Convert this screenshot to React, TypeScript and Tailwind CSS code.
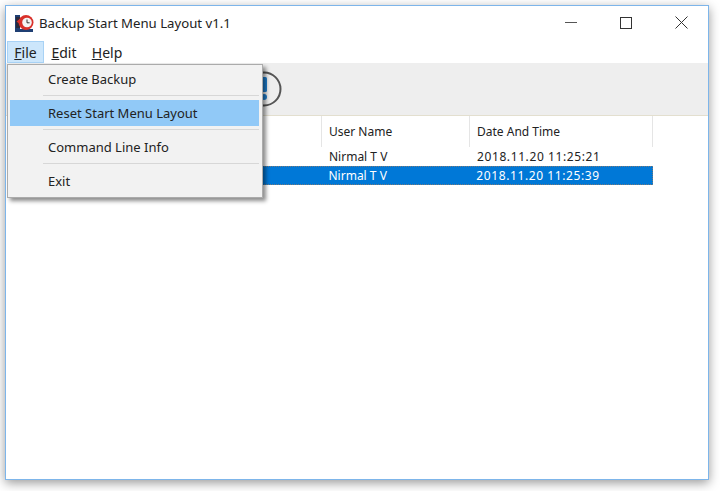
const sans = "font-['Noto_Sans','Open_Sans',sans-serif]";

function AppIcon() {
  return (
    <svg width="19" height="20" viewBox="0 0 19 20" className="shrink-0">
      <path d="M0 1h5v14h13v3H0z" fill="#1f3f73" />
      <rect x="1" y="3" width="4" height="11" fill="#2a2a3a" />
      <circle cx="11" cy="8.5" r="7.5" fill="#d9302a" />
      <circle cx="12" cy="8.5" r="4.8" fill="#f4f4f4" />
      <path d="M12 5.5v3.3h2.6" fill="none" stroke="#333" strokeWidth="1" />
      <path d="M1.5 7.5L6 4v7z" fill="#d9302a" />
    </svg>
  );
}

function WindowButtons() {
  return (
    <div className="mb-[2px] flex items-center">
      <div className="flex h-[33px] w-[55px] items-center justify-center">
        <div className="h-px w-[12px] bg-[#555555]" />
      </div>
      <div className="flex h-[33px] w-[55px] items-center justify-center">
        <div className="h-[12px] w-[12px] border border-[#333333]" />
      </div>
      <div className="flex h-[33px] w-[55px] items-center justify-center pl-[2px]">
        <svg width="13" height="13" viewBox="0 0 13 13">
          <path d="M0.5 0.5l12 12M12.5 0.5l-12 12" stroke="#333333" strokeWidth="1" fill="none" />
        </svg>
      </div>
    </div>
  );
}

function MenuBar() {
  return (
    <div className="flex h-[22px] items-stretch pl-px text-[14px] text-[#222222]">
      <div className="flex w-[37px] items-center justify-center border border-[#a8d2f5] bg-[#cce6fb]">
        <span><u>F</u>ile</span>
      </div>
      <div className="flex w-[40px] items-center justify-center"><span><u>E</u>dit</span></div>
      <div className="flex w-[46px] items-center justify-center"><span><u>H</u>elp</span></div>
    </div>
  );
}

function Toolbar() {
  return (
    <div className="flex h-[53px] items-center border-b border-[#e3dfcf] bg-[#eeeeee] pl-[240px]">
      <svg width="36" height="36" viewBox="0 0 36 36">
        <circle cx="18" cy="18" r="16.5" fill="none" stroke="#555555" strokeWidth="2" />
        <rect x="15.5" y="6" width="5.5" height="15" rx="1.5" fill="#1e7fd0" />
        <circle cx="18" cy="26" r="3" fill="#1e7fd0" />
      </svg>
    </div>
  );
}

function FileMenu() {
  const items = ["Create Backup", "Reset Start Menu Layout", "Command Line Info", "Exit"];
  return (
    <div className="absolute left-[1px] top-[58px] flex h-[134px] w-[256px] flex-col border border-[#ababab] bg-[#f2f2f2] pl-[2px] pr-[3px] pt-[1px] text-[13px] text-[#222222] shadow-[3px_3px_4px_rgba(0,0,0,0.45)]">
      {items.map((label, i) => (
        <div key={label}>
          {i > 0 && <div className="mb-[4px] ml-[33px] mt-[3px] h-px bg-[#d7d7d7]" />}
          <div className={`flex h-[26px] items-center pl-[38px] pt-[2px] ${label === "Reset Start Menu Layout" ? "bg-[#91c9f7]" : ""}`}>
            {label}
          </div>
        </div>
      ))}
    </div>
  );
}

function ListHeader() {
  return (
    <div className="flex h-[31px] text-[12px] text-[#222222]">
      <div className="w-[316px] border-r border-[#e5e5e5]" />
      <div className="flex w-[148px] items-center border-r border-[#e5e5e5] pl-[7px]">User Name</div>
      <div className="flex w-[183px] items-center border-r border-[#e5e5e5] pl-[7px]">Date And Time</div>
    </div>
  );
}

function ListRow({ user, date, selected }: { user: string; date: string; selected?: boolean }) {
  return (
    <div className={`ml-[2px] flex h-[19px] w-[645px] items-center text-[12px] ${selected ? "border border-dotted border-[#7a7a7a] bg-[#0078d7] text-white" : "text-[#222222]"}`}>
      <div className={selected ? "w-[313px]" : "w-[314px]"} />
      <div className="w-[148px] pl-[7px]">{user}</div>
      <div className="w-[183px] pl-[7px] tracking-[0.6px]">{date}</div>
    </div>
  );
}

export default function App() {
  return (
    <div className={`h-[491px] w-[720px] overflow-hidden bg-white pl-[5px] pt-[5px] ${sans}`}>
      <div className="relative flex h-[475px] w-[704px] flex-col border border-[#7db5ea] bg-white shadow-[0_3px_10px_rgba(0,0,0,0.4)]">
        <div className="flex h-[35px] items-center justify-between">
          <div className="flex items-center gap-[5px] pl-[9px] text-[13.2px] text-[#222222]">
            <AppIcon />
            <span>Backup Start Menu Layout v1.1</span>
          </div>
          <WindowButtons />
        </div>
        <MenuBar />
        <Toolbar />
        <ListHeader />
        <div>
          <ListRow user="Nirmal T V" date="2018.11.20 11:25:21" />
          <ListRow user="Nirmal T V" date="2018.11.20 11:25:39" selected />
        </div>
        <FileMenu />
      </div>
    </div>
  );
}
